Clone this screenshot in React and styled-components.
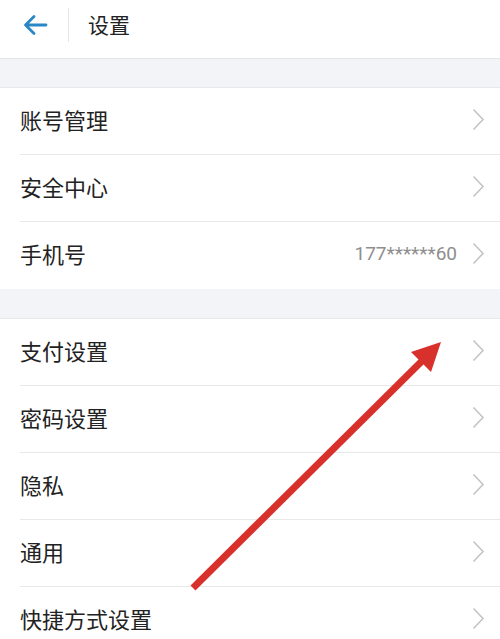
import React from "react";
import styled, { createGlobalStyle } from "styled-components";

const Global = createGlobalStyle`
  html, body { margin: 0; padding: 0; background: #ffffff; }
  body { font-family: "Noto Sans CJK SC", "Noto Sans", sans-serif; }
`;

const Page = styled.div`
  position: relative;
  width: 500px;
  height: 639px;
  overflow: hidden;
  background: #ffffff;
`;

const Header = styled.div`
  height: 58px;
  display: flex;
  align-items: center;
  border-bottom: 1px solid #e4e6e8;
  background: #fff;
`;

const BackButton = styled.div`
  width: 68px;
  height: 100%;
  display: flex;
  align-items: center;
  padding-left: 22px;
  box-sizing: border-box;
`;

const Divider = styled.div`
  width: 1px;
  height: 34px;
  background: #e6e6e6;
  margin-top: -8px;
`;

const Title = styled.div`
  margin-left: 19px;
  margin-top: -10px;
  font-size: 21px;
  color: #222;
`;

const Band = styled.div`
  height: ${(p) => p.$h}px;
  background: #f3f4f7;
  border-bottom: 1px solid #e6e9e8;
  box-sizing: border-box;
`;

const Group = styled.div`
  background: #fff;
`;

const Row = styled.div`
  height: 67px;
  display: flex;
  align-items: center;
  padding: 0 15px 0 20px;
  position: relative;
  box-sizing: border-box;
  &:not(:last-child)::after {
    content: "";
    position: absolute;
    left: 20px;
    right: 0;
    bottom: 0;
    height: 1px;
    background: #e8e8e8;
  }
`;

const Label = styled.div`
  flex: 1;
  font-size: 22px;
  color: #222;
  margin-top: -6px;
`;

const Value = styled.div`
  font-family: "Roboto", "Noto Sans", sans-serif;
  font-size: 19px;
  color: #8e8e8e;
  margin-right: 15px;
  margin-top: -4px;
`;

const Chevron = () => (
  <svg width="13" height="23" viewBox="0 0 13 23" style={{ marginTop: -4 }}>
    <path d="M1.5 1.5 L11 11.5 L1.5 21.5" fill="none" stroke="#c4c4c4" strokeWidth="1.6" />
  </svg>
);

const Overlay = styled.svg`
  position: absolute;
  left: 0;
  top: 0;
  pointer-events: none;
`;

const group1 = [
  { label: "账号管理" },
  { label: "安全中心" },
  { label: "手机号", value: "177******60" },
];

const group2 = [
  { label: "支付设置" },
  { label: "密码设置" },
  { label: "隐私" },
  { label: "通用" },
  { label: "快捷方式设置" },
];

const renderRows = (items) =>
  items.map((it) => (
    <Row key={it.label}>
      <Label>{it.label}</Label>
      {it.value && <Value>{it.value}</Value>}
      <Chevron />
    </Row>
  ));

export default function App() {
  return (
    <>
      <Global />
      <Page>
        <Header>
          <BackButton>
            <svg width="26" height="22" viewBox="0 0 26 22" style={{ marginTop: -8 }}>
              <path
                d="M24 11 H4 M12 2.5 L3.5 11 L12 19.5"
                fill="none"
                stroke="#2a87c6"
                strokeWidth="2.8"
                strokeLinecap="round"
                strokeLinejoin="round"
              />
            </svg>
          </BackButton>
          <Divider />
          <Title>设置</Title>
        </Header>
        <Band $h={29} />
        <Group>{renderRows(group1)}</Group>
        <Band $h={30} />
        <Group>{renderRows(group2)}</Group>
        <Overlay width="500" height="639" viewBox="0 0 500 639">
          <line x1="193" y1="588" x2="425" y2="358" stroke="#d8312b" strokeWidth="7" />
          <polygon points="441,342 411,352 431,372" fill="#d8312b" />
        </Overlay>
      </Page>
    </>
  );
}
